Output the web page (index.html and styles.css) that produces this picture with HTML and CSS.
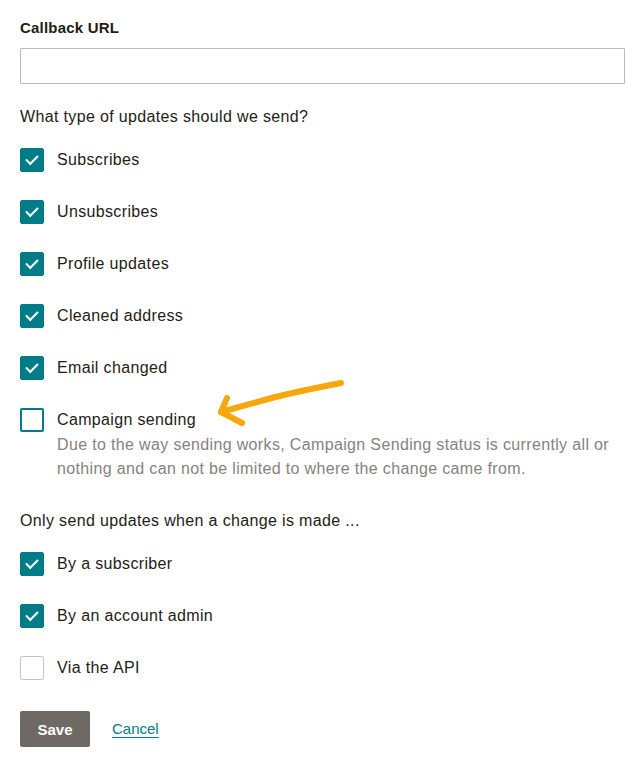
FILE: index.html
```html
<!DOCTYPE html>
<html lang="en">
<head>
    <meta charset="UTF-8">
    <title>Webhook settings</title>
    <link rel="stylesheet" href="styles.css">
</head>
<body>
    <form class="webhook-form">
        <label class="field-label" for="callback">Callback URL</label>
        <input class="text-input" type="text" id="callback">

        <p class="question">What type of updates should we send?</p>
        <ul class="check-list">
            <li class="check-row"><span class="box checked"></span><span class="check-text">Subscribes</span></li>
            <li class="check-row"><span class="box checked"></span><span class="check-text">Unsubscribes</span></li>
            <li class="check-row"><span class="box checked"></span><span class="check-text">Profile updates</span></li>
            <li class="check-row"><span class="box checked"></span><span class="check-text">Cleaned address</span></li>
            <li class="check-row"><span class="box checked"></span><span class="check-text">Email changed</span></li>
            <li class="check-row with-note">
                <span class="box focused"></span>
                <div class="check-body">
                    <span class="check-text">Campaign sending</span>
                    <p class="note">Due to the way sending works, Campaign Sending status is currently all or nothing and can not be limited to where the change came from.</p>
                </div>
                <!-- hand drawn arrow -->
                <svg class="arrow" width="140" height="60" viewBox="0 0 140 60">
                    <path d="M123 9 C97 14 72 19 50 25 C36 29 14 35 3 38" />
                    <path d="M9 24 L3 38 L24 49" />
                </svg>
            </li>
        </ul>

        <p class="question second">Only send updates when a change is made ...</p>
        <ul class="check-list">
            <li class="check-row"><span class="box checked"></span><span class="check-text">By a subscriber</span></li>
            <li class="check-row"><span class="box checked"></span><span class="check-text">By an account admin</span></li>
            <li class="check-row"><span class="box"></span><span class="check-text">Via the API</span></li>
        </ul>

        <div class="actions">
            <button type="button" class="btn-save">Save</button>
            <a href="#" class="link-cancel">Cancel</a>
        </div>
    </form>
</body>
</html>
```

FILE: styles.css
```css
body,
p,
ul,
li {
    margin: 0;
    padding: 0;
}
body {
    background: #fff;
    color: #241c15;
    font-family: "Liberation Sans", Arial, sans-serif;
    font-size: 16px;
    line-height: 24px;
    letter-spacing: 0.35px;
}
.webhook-form {
    display: flex;
    flex-direction: column;
    padding: 16px 0 0 20px;
    width: 605px;
}
.field-label {
    font-weight: bold;
    font-size: 15px;
    letter-spacing: 0.2px;
}
.text-input {
    margin-top: 8px;
    height: 36px;
    box-sizing: border-box;
    border: 1px solid #bdbbb9;
    border-radius: 1px;
    padding: 0 10px;
    font: inherit;
}
.question {
    margin-top: 21px;
}
.question.second {
    margin-top: 28px;
}
.check-list {
    list-style: none;
    display: flex;
    flex-direction: column;
    gap: 28px;
    margin-top: 19px;
}
.check-row {
    display: flex;
    align-items: flex-start;
    gap: 13px;
    position: relative;
}
.box {
    flex: none;
    width: 24px;
    height: 24px;
    box-sizing: border-box;
    border: 1px solid #c5c2bf;
    border-radius: 2px;
    display: flex;
    align-items: center;
    justify-content: center;
}
.box.checked {
    background: #007c89;
    border-color: #007c89;
}
.box.checked::after {
    content: "";
    width: 10px;
    height: 5px;
    border-left: 2px solid #fff;
    border-bottom: 2px solid #fff;
    transform: translate(0, -2px) rotate(-45deg);
}
.box.focused {
    border: 2px solid #007c89;
}
.note {
    color: #87827e;
    margin-top: 1px;
}
.arrow {
    position: absolute;
    left: 198px;
    top: -34px;
}
.arrow path {
    fill: none;
    stroke: #f7a70a;
    stroke-width: 6;
    stroke-linecap: round;
    stroke-linejoin: round;
}
.actions {
    display: flex;
    align-items: center;
    gap: 22px;
    margin-top: 31px;
}
.btn-save {
    width: 70px;
    height: 36px;
    border: none;
    border-radius: 2px;
    background: #6e6964;
    color: #fff;
    font: bold 15px "Liberation Sans", Arial, sans-serif;
}
.link-cancel {
    color: #007c89;
    font-size: 15px;
    letter-spacing: 0;
    text-decoration: underline;
    text-underline-offset: 3px;
}
```
